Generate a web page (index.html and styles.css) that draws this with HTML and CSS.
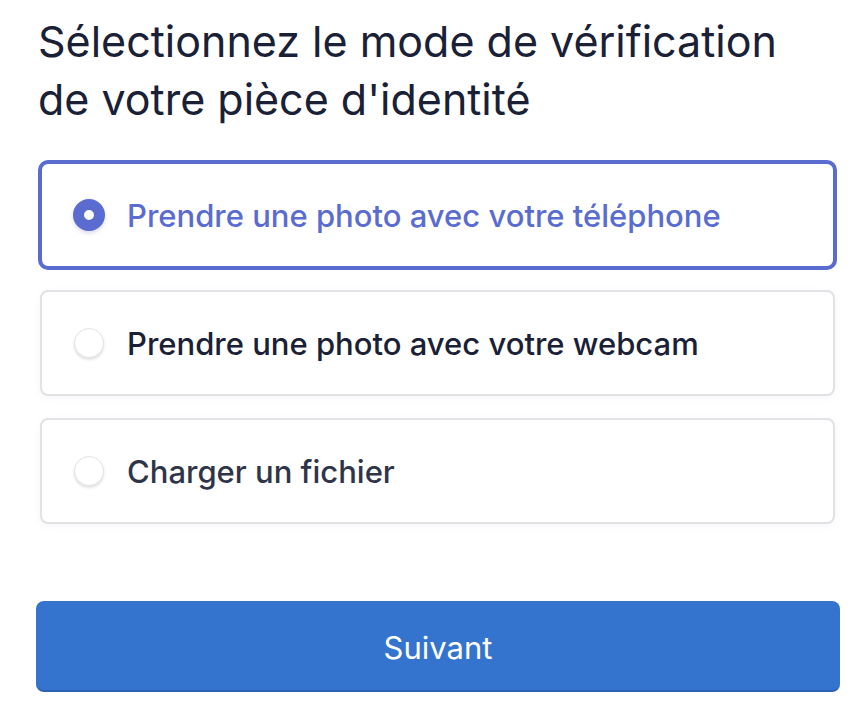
FILE: index.html
```html
<!DOCTYPE html>
<html lang="fr">
<head>
<meta charset="utf-8">
<link rel="stylesheet" href="styles.css">
</head>
<body>
<main class="page">
  <h1 class="title">Sélectionnez le mode de vérification de votre pièce d'identité</h1>
  <div class="options">
    <label class="option option--selected">
      <span class="radio radio--checked"></span>
      <span class="option-label">Prendre une photo avec votre téléphone</span>
    </label>
    <label class="option">
      <span class="radio"></span>
      <span class="option-label">Prendre une photo avec votre webcam</span>
    </label>
    <label class="option option--muted">
      <span class="radio"></span>
      <span class="option-label">Charger un fichier</span>
    </label>
  </div>
  <button class="next">Suivant</button>
</main>
</body>
</html>
```
FILE: styles.css
```css
html, body {
  margin: 0;
  padding: 0;
  background: #ffffff;
}
body {
  font-family: Inter, "Noto Sans", "Liberation Sans", sans-serif;
  color: #1a2035;
}
.page {
  width: 795px;
  padding: 12px 0 0 40px;
}
.title {
  max-width: 770px;
  margin: 0 0 34px -2px;
  font-size: 43px;
  line-height: 58px;
  font-weight: 400;
  color: #1a2035;
  letter-spacing: 0;
}
.options {
  display: flex;
  flex-direction: column;
  gap: 22px;
}
.option {
  box-sizing: border-box;
  height: 106px;
  display: flex;
  align-items: center;
  gap: 23px;
  padding-left: 32px;
  border: 2px solid #e1e1e6;
  border-radius: 8px;
  background: #fff;
  box-shadow: 0 2px 8px rgba(0, 0, 0, 0.04);
}
.option--selected {
  border-color: #5a6ccf;
  box-shadow: 0 0 0 2px #5a6ccf;
}
.radio {
  box-sizing: border-box;
  width: 30px;
  height: 30px;
  border-radius: 50%;
  border: 1px solid #e4e4e8;
  background: #fff;
  box-shadow: 0 2px 3px rgba(0, 0, 0, 0.12);
  flex: none;
}
.radio--checked {
  width: 32px;
  height: 32px;
  margin-left: -1px;
  margin-right: -1px;
  border: 11px solid #5a6ccf;
  box-shadow: 0 2px 4px rgba(60, 70, 160, 0.2);
}
.option-label {
  font-size: 31px;
  font-weight: 500;
  color: #1a2035;
}
.option--selected .option-label {
  color: #5a6ccf;
}
.option--muted .option-label {
  color: #2f3548;
}
.next {
  display: block;
  box-sizing: border-box;
  width: 804px;
  height: 91px;
  margin: 77px 0 0 -4px;
  padding-top: 4px;
  border: none;
  border-bottom: 2px solid #2c62b6;
  border-radius: 8px;
  background: #3474cf;
  color: #ffffff;
  font-family: Inter, "Noto Sans", "Liberation Sans", sans-serif;
  font-size: 31px;
  font-weight: 400;
}
```
